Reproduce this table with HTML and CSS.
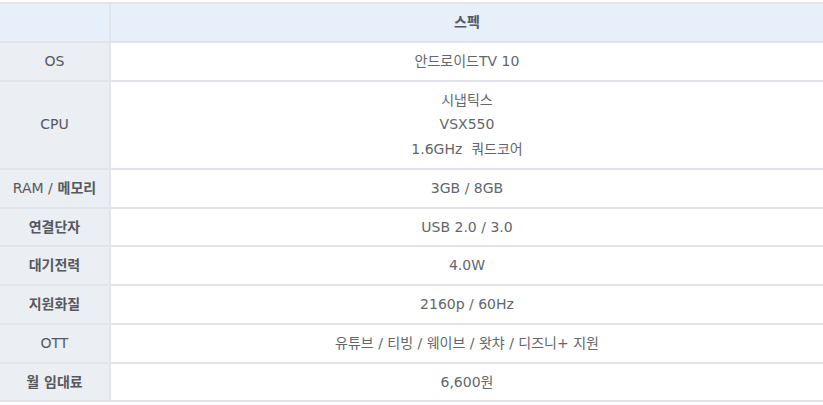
FILE: index.html
```html
<!DOCTYPE html>
<html lang="ko">
<head>
<meta charset="utf-8">
<link rel="stylesheet" href="styles.css">
</head>
<body>
<table class="spec">
  <colgroup>
    <col class="col-label">
    <col class="col-value">
  </colgroup>
  <thead>
    <tr><th class="corner"></th><th class="head">스펙</th></tr>
  </thead>
  <tbody>
    <tr><th><span class="lat">OS</span></th><td>안드로이드TV 10</td></tr>
    <tr><th><span class="lat">CPU</span></th><td>시냅틱스<br>VSX550<br>1.6GHz &nbsp;쿼드코어</td></tr>
    <tr><th><span class="lat">RAM /</span> 메모리</th><td>3GB / 8GB</td></tr>
    <tr><th>연결단자</th><td>USB 2.0 / 3.0</td></tr>
    <tr><th>대기전력</th><td>4.0W</td></tr>
    <tr><th>지원화질</th><td>2160p / 60Hz</td></tr>
    <tr><th><span class="lat">OTT</span></th><td>유튜브 / 티빙 / 웨이브 / 왓챠 / 디즈니+ 지원</td></tr>
    <tr><th>월 임대료</th><td>6,600원</td></tr>
  </tbody>
</table>
</body>
</html>
```
FILE: styles.css
```css
html, body {
  margin: 0;
  padding: 0;
  background: #ffffff;
}
body {
  padding-top: 2px;
  font-family: "DejaVu Sans", "Noto Sans CJK KR", sans-serif;
  font-size: 14px;
  color: #63666b;
}
.spec {
  width: 100%;
  border-collapse: collapse;
  table-layout: fixed;
}
.col-label {
  width: 110px;
}
.spec th, .spec td {
  border: 2px solid #e3e4e9;
  padding: 6px 2px;
  line-height: 24.75px;
  text-align: center;
  vertical-align: middle;
  white-space: nowrap;
}
.spec tr > :first-child { border-left: none; }
.spec tr > :last-child { border-right: none; }
.spec th {
  background: #ebeef3;
  color: #55585e;
  font-weight: 700;
}
.spec th .lat {
  font-weight: 400;
}
.spec .corner, .spec .head {
  background: #e7effb;
}
.spec .head {
  font-weight: 700;
  color: #55585e;
}
.spec td {
  background: #ffffff;
  font-weight: 400;
}
```
